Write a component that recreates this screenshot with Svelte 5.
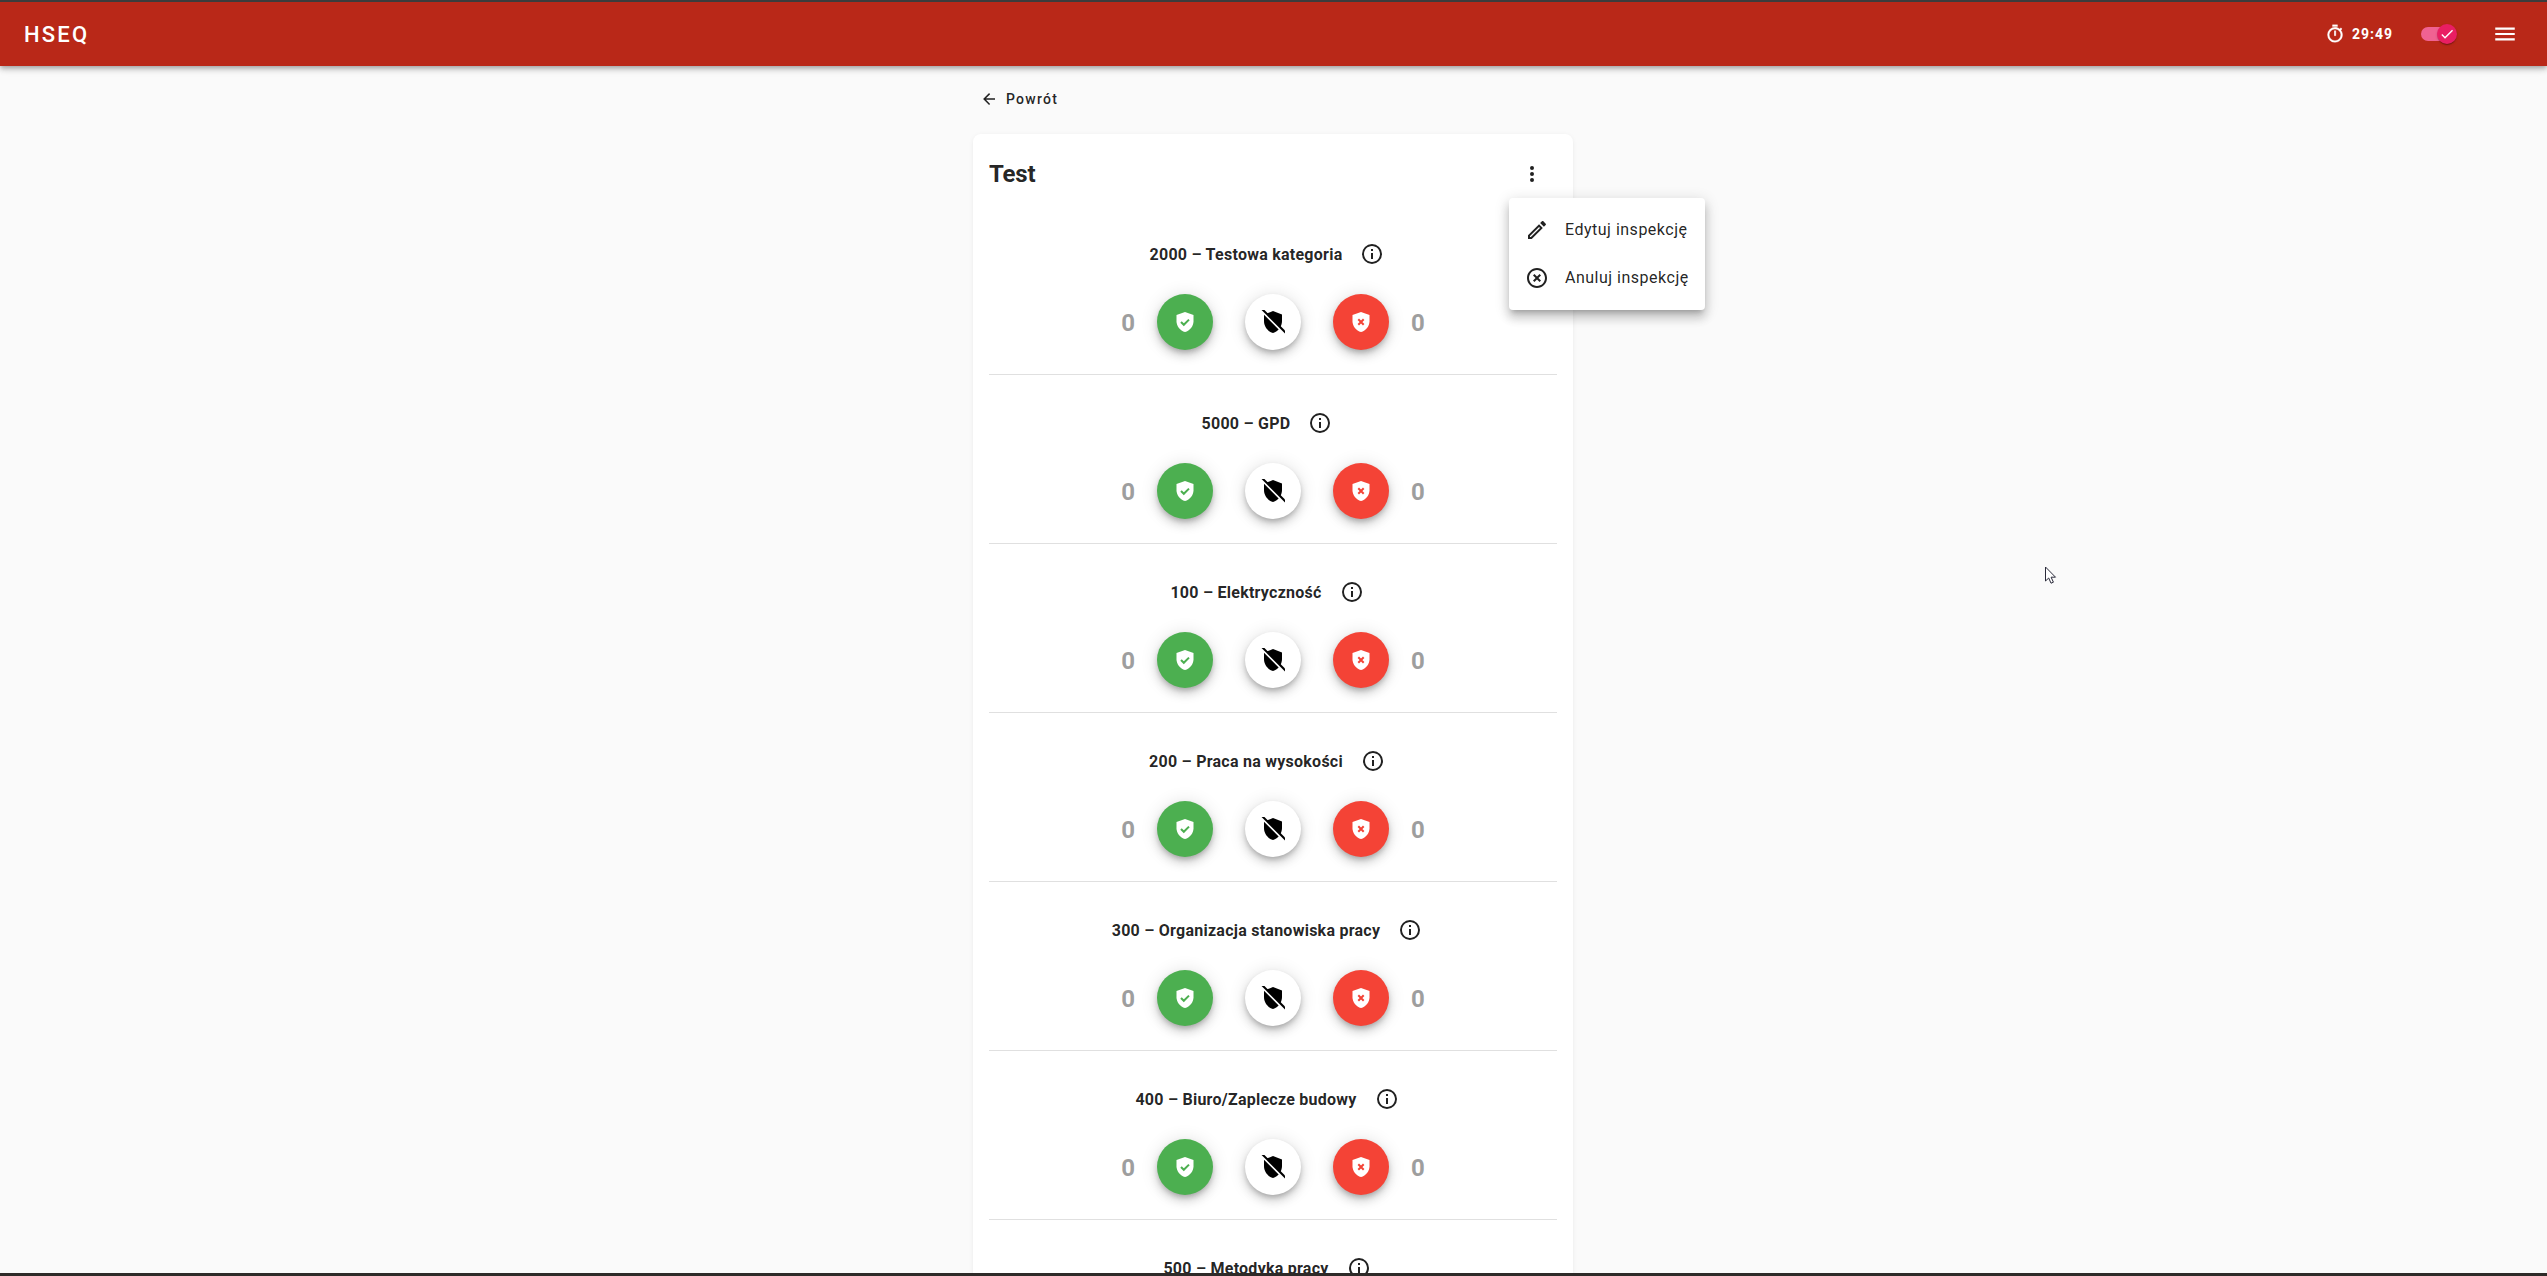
<script>
	const categories = [
		'2000 – Testowa kategoria',
		'5000 – GPD',
		'100 – Elektryczność',
		'200 – Praca na wysokości',
		'300 – Organizacja stanowiska pracy',
		'400 – Biuro/Zaplecze budowy',
		'500 – Metodyka pracy'
	];
</script>

<div class="frame">
	<header class="toolbar">
		<span class="logo">HSEQ</span>
		<div class="timer">
			<svg viewBox="0 0 24 24" width="20" height="20"><path fill="currentColor" stroke="currentColor" stroke-width="0.4" d="M12,20A7,7 0 0,1 5,13A7,7 0 0,1 12,6A7,7 0 0,1 19,13A7,7 0 0,1 12,20M19.03,7.39L20.45,5.97C20,5.46 19.55,5 19.04,4.56L17.62,6C16.07,4.74 14.12,4 12,4A9,9 0 0,0 3,13A9,9 0 0,0 12,22C17,22 21,17.97 21,13C21,10.88 20.26,8.93 19.03,7.39M11,14H13V8H11M15,1H9V3H15V1Z" /></svg>
			<span>29:49</span>
		</div>
		<div class="switch">
			<span class="track"></span>
			<span class="thumb">
				<svg viewBox="0 0 24 24" width="16" height="16"><path fill="#fff" d="M21,7L9,19L3.5,13.5L4.91,12.09L9,16.17L19.59,5.59L21,7Z" /></svg>
			</span>
		</div>
		<svg class="burger" viewBox="0 0 24 24" width="26" height="26"><path fill="currentColor" d="M3,6H21V8H3V6M3,11H21V13H3V11M3,16H21V18H3V16Z" /></svg>
	</header>

	<main class="content">
		<div class="column">
			<button class="back">
				<svg viewBox="0 0 24 24" width="18" height="18"><path fill="currentColor" d="M20,11V13H8L13.5,18.5L12.08,19.92L4.16,12L12.08,4.08L13.5,5.5L8,11H20Z" /></svg>
				Powrót
			</button>

			<section class="card">
				<div class="card-head">
					<h1>Test</h1>
					<svg viewBox="0 0 24 24" width="24" height="24"><path fill="#212121" d="M12,16A2,2 0 0,1 14,18A2,2 0 0,1 12,20A2,2 0 0,1 10,18A2,2 0 0,1 12,16M12,10A2,2 0 0,1 14,12A2,2 0 0,1 12,14A2,2 0 0,1 10,12A2,2 0 0,1 12,10M12,4A2,2 0 0,1 14,6A2,2 0 0,1 12,8A2,2 0 0,1 10,6A2,2 0 0,1 12,4Z" /></svg>
				</div>

				{#each categories as name}
					<div class="row">
						<div class="row-title">
							<span>{name}</span>
							<svg viewBox="0 0 24 24" width="24" height="24"><path fill="#212121" d="M11,9H13V7H11M12,20C7.59,20 4,16.41 4,12C4,7.59 7.59,4 12,4C16.41,4 20,7.59 20,12C20,16.41 16.41,20 12,20M12,2A10,10 0 0,0 2,12A10,10 0 0,0 12,22A10,10 0 0,0 22,12A10,10 0 0,0 12,2M11,17H13V11H11V17Z" /></svg>
						</div>
						<div class="row-actions">
							<span class="count">0</span>
							<span class="fab green">
								<svg viewBox="0 0 18 20" width="18" height="20"><path fill="#fff" d="M9 0L0.5 3v6.2c0 5 3.6 9.4 8.5 10.8 4.9-1.4 8.5-5.8 8.5-10.8V3L9 0z" /><path fill="none" stroke="#4caf50" stroke-width="2" d="M5 10l2.8 2.8 5.2-5.2" /></svg>
							</span>
							<span class="fab white">
								<svg viewBox="0 0 24 24" width="24" height="24"><path fill="#000" d="M12 1L3 4.5v6.5c0 5.5 3.8 10.7 9 12 5.2-1.3 9-6.5 9-12V4.5L12 1z" /><path stroke="#fff" stroke-width="2.6" d="M0 0l24 24" /><path stroke="#000" stroke-width="2" d="M1.2 -0.8l24 24" /></svg>
							</span>
							<span class="fab red">
								<svg viewBox="0 0 18 20" width="18" height="20"><path fill="#fff" d="M9 0L0.5 3v6.2c0 5 3.6 9.4 8.5 10.8 4.9-1.4 8.5-5.8 8.5-10.8V3L9 0z" /><path fill="none" stroke="#f44336" stroke-width="2" d="M6.3 7.3l5.4 5.4M11.7 7.3l-5.4 5.4" /></svg>
							</span>
							<span class="count">0</span>
						</div>
					</div>
				{/each}
			</section>
		</div>

		<div class="menu">
			<div class="menu-item">
				<svg viewBox="0 0 24 24" width="24" height="24"><path fill="#212121" d="M14.06,9L15,9.94L5.92,19H5V18.08L14.06,9M17.66,3C17.41,3 17.15,3.1 16.96,3.29L15.13,5.12L18.88,8.87L20.71,7.04C21.1,6.65 21.1,6 20.71,5.63L18.37,3.29C18.17,3.09 17.92,3 17.66,3M14.06,6.19L3,17.25V21H6.75L17.81,9.94L14.06,6.19Z" /></svg>
				<span>Edytuj inspekcję</span>
			</div>
			<div class="menu-item">
				<svg viewBox="0 0 24 24" width="24" height="24"><path fill="#212121" d="M12,20C7.59,20 4,16.41 4,12C4,7.59 7.59,4 12,4C16.41,4 20,7.59 20,12C20,16.41 16.41,20 12,20M12,2C6.47,2 2,6.47 2,12C2,17.53 6.47,22 12,22C17.53,22 22,17.53 22,12C22,6.47 17.53,2 12,2M14.59,8L12,10.59L9.41,8L8,9.41L10.59,12L8,14.59L9.41,16L12,13.41L14.59,16L16,14.59L13.41,12L16,9.41L14.59,8Z" /></svg>
				<span>Anuluj inspekcję</span>
			</div>
		</div>

		<svg class="cursor" viewBox="0 0 14 20" width="14" height="20"><path fill="#fff" stroke="#2a2a3a" stroke-width="1" d="M1.5 1v14l3.2-3 2.3 5.2 2.4-1-2.3-5h4.4z" /></svg>
	</main>
</div>

<style>
	:global(body) {
		background: #fafafa;
		overflow: hidden;
	}

	.frame {
		height: 1276px;
		box-sizing: border-box;
		border-top: 2px solid #3c3c3c;
		border-bottom: 3px solid #2e2a28;
		display: flex;
		flex-direction: column;
		overflow: hidden;
		font-family: Roboto, 'Liberation Sans', sans-serif;
		color: rgba(0, 0, 0, 0.87);
	}

	.toolbar {
		flex: none;
		height: 64px;
		background: #b92818;
		color: #fff;
		display: flex;
		align-items: center;
		padding: 0 29px 0 24px;
		position: relative;
		z-index: 2;
		box-shadow: 0 2px 4px -1px rgba(0, 0, 0, 0.2), 0 4px 5px 0 rgba(0, 0, 0, 0.14), 0 1px 10px 0 rgba(0, 0, 0, 0.12);
	}

	.logo {
		font-size: 22px;
		font-weight: 500;
		letter-spacing: 0.1em;
		margin-right: auto;
	}

	.timer {
		display: flex;
		align-items: center;
		gap: 7px;
		font-size: 14px;
		font-weight: 700;
		letter-spacing: 1px;
	}

	.switch {
		position: relative;
		width: 40px;
		height: 24px;
		margin: 4px 0 0 28px;
	}

	.track {
		position: absolute;
		left: 0;
		top: 3px;
		width: 34px;
		height: 14px;
		border-radius: 7px;
		background: #f06292;
	}

	.thumb {
		position: absolute;
		left: 16px;
		top: 0;
		width: 20px;
		height: 20px;
		border-radius: 50%;
		background: #e91e63;
		display: flex;
		align-items: center;
		justify-content: center;
		box-shadow: 0 2px 1px -1px rgba(0, 0, 0, 0.2), 0 1px 1px rgba(0, 0, 0, 0.14), 0 1px 3px rgba(0, 0, 0, 0.12);
	}

	.burger {
		margin-left: 31px;
	}

	.content {
		flex: 1;
		min-height: 0;
		position: relative;
		display: flex;
		justify-content: center;
	}

	.column {
		width: 600px;
		margin-left: -1px;
	}

	.back {
		display: flex;
		align-items: center;
		gap: 8px;
		height: 36px;
		margin-top: 15px;
		padding: 0 7px;
		border: 0;
		background: none;
		color: rgba(0, 0, 0, 0.87);
		font: 500 14px Roboto, sans-serif;
		letter-spacing: 1.25px;
	}

	.card {
		margin-top: 17px;
		background: #fff;
		border-radius: 8px;
		box-shadow: 0 3px 1px -2px rgba(0, 0, 0, 0.02), 0 2px 2px 0 rgba(0, 0, 0, 0.02), 0 1px 5px 0 rgba(0, 0, 0, 0.06);
		padding: 0 16px;
	}

	.card-head {
		display: flex;
		align-items: center;
		justify-content: space-between;
		box-sizing: border-box;
		height: 72px;
		padding: 8px 13px 0 0;
	}

	h1 {
		margin: 0;
		font-size: 24px;
		font-weight: 700;
		letter-spacing: -0.2px;
	}

	.row {
		height: 169px;
		box-sizing: border-box;
		border-bottom: 1px solid #e0e0e0;
		padding-top: 36px;
	}

	.row-title {
		display: flex;
		align-items: center;
		justify-content: center;
		gap: 18px;
		height: 24px;
		padding-right: 12px;
		font-size: 16px;
		font-weight: 700;
		letter-spacing: 0.25px;
	}

	.row-actions {
		display: flex;
		align-items: center;
		justify-content: center;
		gap: 32px;
		margin-top: 28px;
	}

	.count {
		font-size: 24px;
		font-weight: 700;
		color: #9e9e9e;
		margin: 2px -10px 0;
	}

	.fab {
		width: 56px;
		height: 56px;
		border-radius: 50%;
		display: flex;
		align-items: center;
		justify-content: center;
		box-shadow: 0 3px 5px -1px rgba(0, 0, 0, 0.2), 0 6px 10px 0 rgba(0, 0, 0, 0.14), 0 1px 18px 0 rgba(0, 0, 0, 0.12);
	}

	.green { background: #4caf50; }
	.white { background: #fff; }
	.red { background: #f44336; }

	.menu {
		position: absolute;
		left: 1509px;
		top: 132px;
		width: 196px;
		padding: 8px 0;
		background: #fff;
		border-radius: 4px;
		box-shadow: 0 5px 5px -3px rgba(0, 0, 0, 0.2), 0 8px 10px 1px rgba(0, 0, 0, 0.14), 0 3px 14px 2px rgba(0, 0, 0, 0.12);
	}

	.menu-item {
		display: flex;
		align-items: center;
		gap: 16px;
		height: 48px;
		padding: 0 16px;
		font-size: 16px;
		letter-spacing: 0.5px;
		white-space: nowrap;
	}

	.menu-item span {
		margin-top: -2px;
	}

	.cursor {
		position: absolute;
		left: 2044px;
		top: 500px;
	}
</style>
